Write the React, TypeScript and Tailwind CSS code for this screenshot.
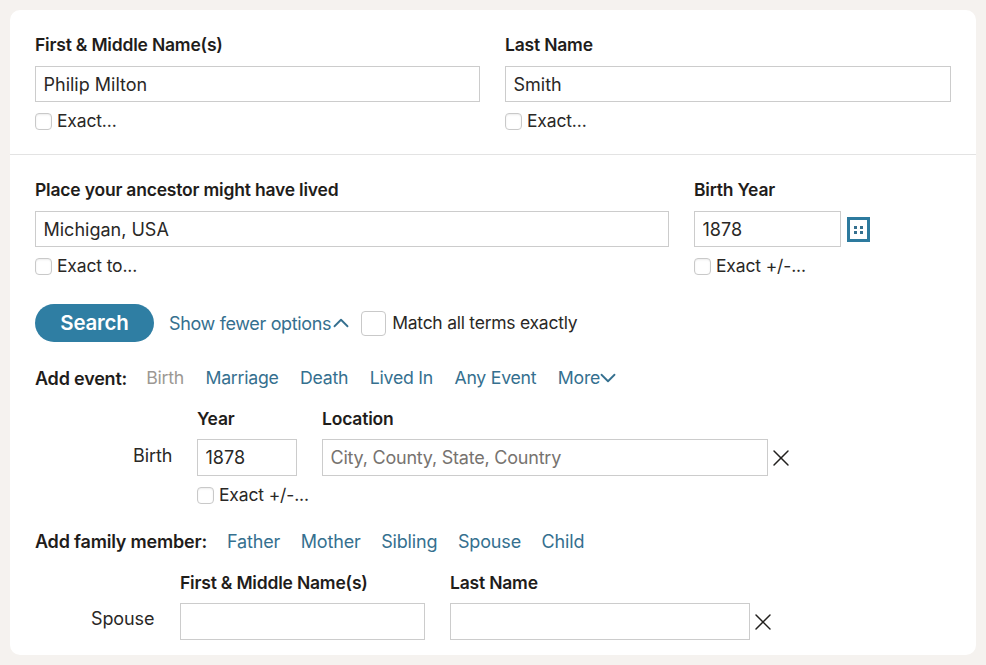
/** Ancestor search form */

import { ChevronDown, ChevronUp, X } from "lucide-react";

const font = "font-['Inter','Liberation_Sans',sans-serif]";

function Label({ children }: { children: React.ReactNode }) {
  return <div className="text-[17.5px] leading-[20px] font-semibold text-[#1f1d1b] tracking-[-0.2px]">{children}</div>;
}

function Field({ value, placeholder, className }: { value?: string; placeholder?: string; className: string }) {
  return (
    <input
      readOnly
      value={value ?? ""}
      placeholder={placeholder}
      className={`border border-[#cccccc] bg-white pl-[7.5px] pr-2 text-[18px] text-[#2a2826] placeholder:text-[#77736f] placeholder:tracking-[-0.22px] outline-none ${className}`}
    />
  );
}

function Check({ label }: { label: string }) {
  return (
    <div className="flex items-center gap-[5px] h-[18px] mt-[10px] whitespace-nowrap">
      <span className="w-[17px] h-[17px] shrink-0 rounded-[4px] border border-[#c9c9c9] bg-white shadow-[inset_0_1px_2px_rgba(0,0,0,0.08)]" />
      <span className="text-[17.5px] leading-[18px] text-[#2a2826] tracking-[-0.15px]">{label}</span>
    </div>
  );
}

function LinkRow({ title, items, rowClass, titleClass }: { title: string; items: string[]; rowClass: string; titleClass: string }) {
  return (
    <div className={`flex items-center h-[22px] ${rowClass}`}>
      <span className={`text-[18px] font-semibold text-[#1f1d1b] tracking-[-0.2px] ${titleClass}`}>{title}</span>
      {items.map((item) => (
        <span key={item} className={item === "Birth" ? "text-[#9c9893]" : "text-[#35708f]"}>
          {item}
        </span>
      ))}
    </div>
  );
}

export default function App() {
  return (
    <div className={`w-[986px] h-[665px] bg-[#f5f2ef] p-[10px] overflow-hidden ${font}`}>
      <div className="w-[966px] h-[645px] bg-white rounded-[10px] overflow-hidden">
        {/* Name row */}
        <div className="h-[145px] px-[25px] pt-[25px] border-b border-[#e3e3e3] grid grid-cols-[445px_446px] gap-x-[25px] content-start">
          <div>
            <Label>First &amp; Middle Name(s)</Label>
            <Field value="Philip Milton" className="h-[36px] w-full mt-[11px] block" />
            <Check label="Exact..." />
          </div>
          <div>
            <Label>Last Name</Label>
            <Field value="Smith" className="h-[36px] w-full mt-[11px] block" />
            <Check label="Exact..." />
          </div>
        </div>

        <div className="px-[25px] pt-[25px]">
          {/* Place + birth year */}
          <div className="flex gap-[25px]">
            <div className="w-[634px]">
              <Label>Place your ancestor might have lived</Label>
              <Field value="Michigan, USA" className="h-[36px] w-full mt-[11px] block" />
              <Check label="Exact to..." />
            </div>
            <div>
              <Label>Birth Year</Label>
              <div className="flex items-center gap-[6px] mt-[11px]">
                <Field value="1878" className="h-[36px] w-[147px]" />
                <svg width="23" height="25" viewBox="0 0 23 25">
                  <rect x="1.5" y="1.5" width="20" height="22" fill="white" stroke="#2d7a9e" strokeWidth="3" />
                  <g fill="#35708f">
                    <rect x="7" y="9" width="3" height="3" />
                    <rect x="13" y="9" width="3" height="3" />
                    <rect x="7" y="14" width="3" height="3" />
                    <rect x="13" y="14" width="3" height="3" />
                  </g>
                </svg>
              </div>
              <Check label="Exact +/-..." />
            </div>
          </div>

          {/* Search actions */}
          <div className="flex items-center mt-[29px] h-[38px]">
            <button className="w-[119px] h-[38px] rounded-full bg-[#2f7ea3] text-white text-[20.5px] font-semibold tracking-[-0.2px]">
              Search
            </button>
            <span className="ml-[15px] text-[18px] text-[#35708f] tracking-[-0.35px]">Show fewer options</span>
            <ChevronUp size={26} strokeWidth={1.7} className="text-[#35708f] -ml-[3px]" />
            <span className="ml-[7px] w-[25px] h-[25px] rounded-[4px] border border-[#c9c9c9] bg-white" />
            <span className="ml-[6px] text-[17.5px] text-[#2a2826] tracking-[-0.25px]">Match all terms exactly</span>
          </div>

          {/* Events */}
          <div className="flex items-center mt-[25px] h-[22px]">
            <LinkRow
              title="Add event:"
              items={["Birth", "Marriage", "Death", "Lived In", "Any Event", "More"]}
              rowClass="gap-[21.5px] text-[17.7px] tracking-[-0.25px]"
              titleClass="-mr-[2.5px]"
            />
            <ChevronDown size={26} strokeWidth={1.7} className="text-[#35708f] -ml-[5px]" />
          </div>

          <div className="flex mt-[20px]">
            <div className="w-[162px] pt-[33px] pl-[98px] text-[18px] text-[#2a2826] tracking-[-0.1px]">Birth</div>
            <div className="w-[100px]">
              <Label>Year</Label>
              <Field value="1878" className="h-[37px] w-[100px] mt-[10px] block" />
              <Check label="Exact +/-..." />
            </div>
            <div className="ml-[25px]">
              <Label>Location</Label>
              <div className="flex items-center mt-[10px]">
                <Field placeholder="City, County, State, Country" className="h-[37px] w-[446px]" />
                <X size={28} strokeWidth={1.25} className="text-[#22201e] -ml-[1px]" />
              </div>
            </div>
          </div>

          {/* Family */}
          <div className="mt-[26px]">
            <LinkRow
              title="Add family member:"
              items={["Father", "Mother", "Sibling", "Spouse", "Child"]}
              rowClass="gap-[20.5px] text-[18px] tracking-[-0.15px]"
              titleClass="-mr-[0.5px]"
            />
          </div>

          <div className="flex mt-[21px]">
            <div className="w-[145px] pt-[32px] pl-[56px] text-[18px] text-[#2a2826] tracking-[-0.1px]">Spouse</div>
            <div>
              <Label>First &amp; Middle Name(s)</Label>
              <Field className="h-[37px] w-[245px] mt-[10px] block" />
            </div>
            <div className="ml-[25px]">
              <Label>Last Name</Label>
              <div className="flex items-center mt-[10px]">
                <Field className="h-[37px] w-[300px]" />
                <X size={28} strokeWidth={1.25} className="text-[#22201e] -ml-[1px]" />
              </div>
            </div>
          </div>
        </div>
      </div>
    </div>
  );
}
